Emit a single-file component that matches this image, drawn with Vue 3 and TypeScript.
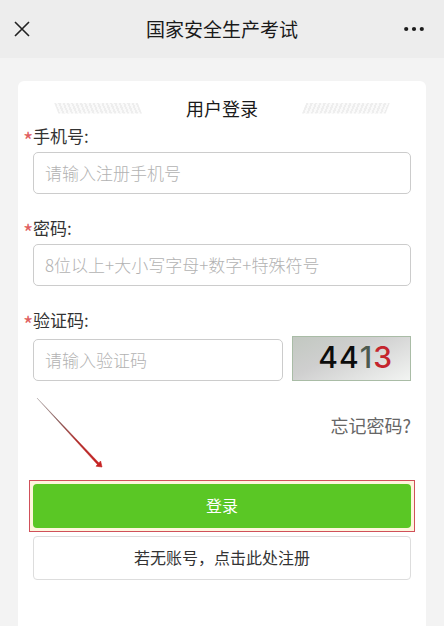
<script setup lang="ts">
import { ref } from 'vue'

const phone = ref('')
const password = ref('')
const code = ref('')

const captcha = [
  { digit: '4', tone: 'black' },
  { digit: '4', tone: 'black' },
  { digit: '1', tone: 'grey' },
  { digit: '3', tone: 'red' },
]
</script>

<template>
  <div class="page">
    <header class="bar">
      <button class="icon-button" type="button" aria-label="关闭">
        <svg width="16" height="16" viewBox="0 0 16 16">
          <path d="M1 1 L15 15 M15 1 L1 15" fill="none" stroke="#222" stroke-width="1.6" />
        </svg>
      </button>
      <h1>国家安全生产考试</h1>
      <button class="icon-button more" type="button" aria-label="更多">
        <svg width="20" height="16" viewBox="0 0 20 16">
          <g fill="#1c1c1c">
            <circle cx="2.2" cy="8" r="2.1" />
            <circle cx="10" cy="8" r="2.1" />
            <circle cx="17.8" cy="8" r="2.1" />
          </g>
        </svg>
      </button>
    </header>

    <main class="card">
      <div class="heading">
        <span class="stripes left"></span>
        <h2>用户登录</h2>
        <span class="stripes right"></span>
      </div>

      <form @submit.prevent>
        <div class="field">
          <label for="phone"><span class="star">*</span>手机号:</label>
          <input id="phone" v-model="phone" type="tel" placeholder="请输入注册手机号" />
        </div>
        <div class="field">
          <label for="password"><span class="star">*</span>密码:</label>
          <input id="password" v-model="password" type="password" placeholder="8位以上+大小写字母+数字+特殊符号" />
        </div>
        <div class="field">
          <label for="code"><span class="star">*</span>验证码:</label>
          <div class="code-row">
            <input id="code" v-model="code" type="text" placeholder="请输入验证码" />
            <div class="captcha">
              <span v-for="(c, i) in captcha" :key="i" :class="c.tone">{{ c.digit }}</span>
            </div>
          </div>
        </div>

        <div class="forgot"><a href="#">忘记密码?</a></div>

        <div class="submit">
          <svg class="arrow" width="70" height="74" viewBox="0 0 70 74">
            <defs>
              <linearGradient id="shaft" x1="0" y1="0" x2="1" y2="1">
                <stop offset="0" stop-color="#a09696" />
                <stop offset="0.35" stop-color="#7d4a48" />
                <stop offset="0.65" stop-color="#b02a28" />
                <stop offset="1" stop-color="#c62222" />
              </linearGradient>
            </defs>
            <path d="M1 1 L63 66 L61.4 67.6 Z" fill="url(#shaft)" stroke="url(#shaft)" stroke-width="0.4" />
            <path d="M66 70 L60 69.2 L64.6 64 Z" fill="#c62222" stroke="#c62222" stroke-width="0.6" />
          </svg>
          <button class="login" type="submit">登录</button>
        </div>
        <button class="register" type="button">若无账号，点击此处注册</button>
      </form>
    </main>
  </div>
</template>

<style>
body {
  background: #f3f3f3;
}
</style>

<style scoped>
.page {
  display: flex;
  flex-direction: column;
  min-height: 100vh;
  font-family: "Noto Sans CJK SC", sans-serif;
  color: #333;
  background: #f3f3f3;
}
.page * {
  box-sizing: border-box;
}
button,
input {
  font-family: inherit;
}
.bar {
  display: grid;
  grid-template-columns: 1fr auto 1fr;
  align-items: center;
  height: 58px;
  padding: 0 20px 0 14px;
  background: #ededed;
}
.bar h1 {
  margin: 0 0 0 6px;
  font-size: 19px;
  font-weight: 400;
  line-height: 28px;
  color: #1a1a1a;
}
.icon-button {
  display: flex;
  padding: 0;
  border: 0;
  background: none;
}
.more {
  justify-self: end;
}
.card {
  flex: 1;
  margin: 23px 18px 0;
  padding: 13px 15px 20px;
  border-radius: 6px 6px 0 0;
  background: #fff;
}
.heading {
  display: flex;
  align-items: center;
  justify-content: center;
  gap: 44px;
}
h2 {
  margin: 0;
  font-size: 18px;
  font-weight: 400;
  line-height: 28px;
  color: #1a1a1a;
}
.stripes {
  width: 88px;
  height: 11px;
}
.left {
  background: repeating-linear-gradient(68deg, #eee 0 2px, #fafafa 2px 4px);
  clip-path: polygon(0 0, 95% 0, 100% 100%, 5% 100%);
}
.right {
  background: repeating-linear-gradient(112deg, #eee 0 2px, #fafafa 2px 4px);
  clip-path: polygon(5% 0, 100% 0, 95% 100%, 0 100%);
}
.field {
  margin-bottom: 20px;
}
label {
  display: flex;
  height: 30px;
  margin-left: -10px;
  font-size: 17px;
  line-height: 28px;
}
.star {
  width: 10px;
  font-size: 22px;
  line-height: 34px;
  color: #e06060;
}
input {
  display: block;
  width: 100%;
  height: 42px;
  padding: 0 11px 2px;
  border: 1px solid #ccc;
  border-radius: 5px;
  background: #fff;
  font-size: 17px;
  color: #333;
  outline: none;
}
input::placeholder {
  color: #b2b2b2;
  font-weight: 300;
  opacity: 1;
}
.code-row {
  display: flex;
  align-items: flex-end;
  gap: 9px;
}
.code-row input {
  flex: 1;
  min-width: 0;
}
.captcha {
  display: flex;
  justify-content: flex-end;
  align-items: center;
  gap: 1px;
  width: 119px;
  height: 45px;
  padding: 0 18px 4px 0;
  border: 1px solid #a9bca6;
  background: linear-gradient(155deg, #c2c8c1, #cfcfcf 40%, #f2f4f2);
  font-family: Inter, sans-serif;
  font-size: 30px;
  font-weight: 500;
  line-height: 36px;
}
.black {
  color: #0c0c0c;
}
.grey {
  color: #4d5a4f;
}
.red {
  color: #c4252d;
}
.forgot {
  margin-top: 30px;
  font-size: 18px;
  line-height: 28px;
  text-align: right;
}
.forgot a {
  color: #666;
  text-decoration: none;
}
.submit {
  position: relative;
  margin: 41px -4px 0;
  padding: 3px;
  border: 1px solid #d0505a;
  background: #fdf6dc;
}
.arrow {
  position: absolute;
  left: 6px;
  bottom: 60px;
}
.login,
.register {
  display: block;
  width: 100%;
  height: 44px;
  padding: 0 0 2px;
  border-radius: 4px;
  font-size: 16px;
}
.login {
  border: 0;
  background: #5ac725;
  color: #fff;
}
.register {
  margin-top: 4px;
  border: 1px solid #ddd;
  background: #fff;
  color: #333;
}
</style>
